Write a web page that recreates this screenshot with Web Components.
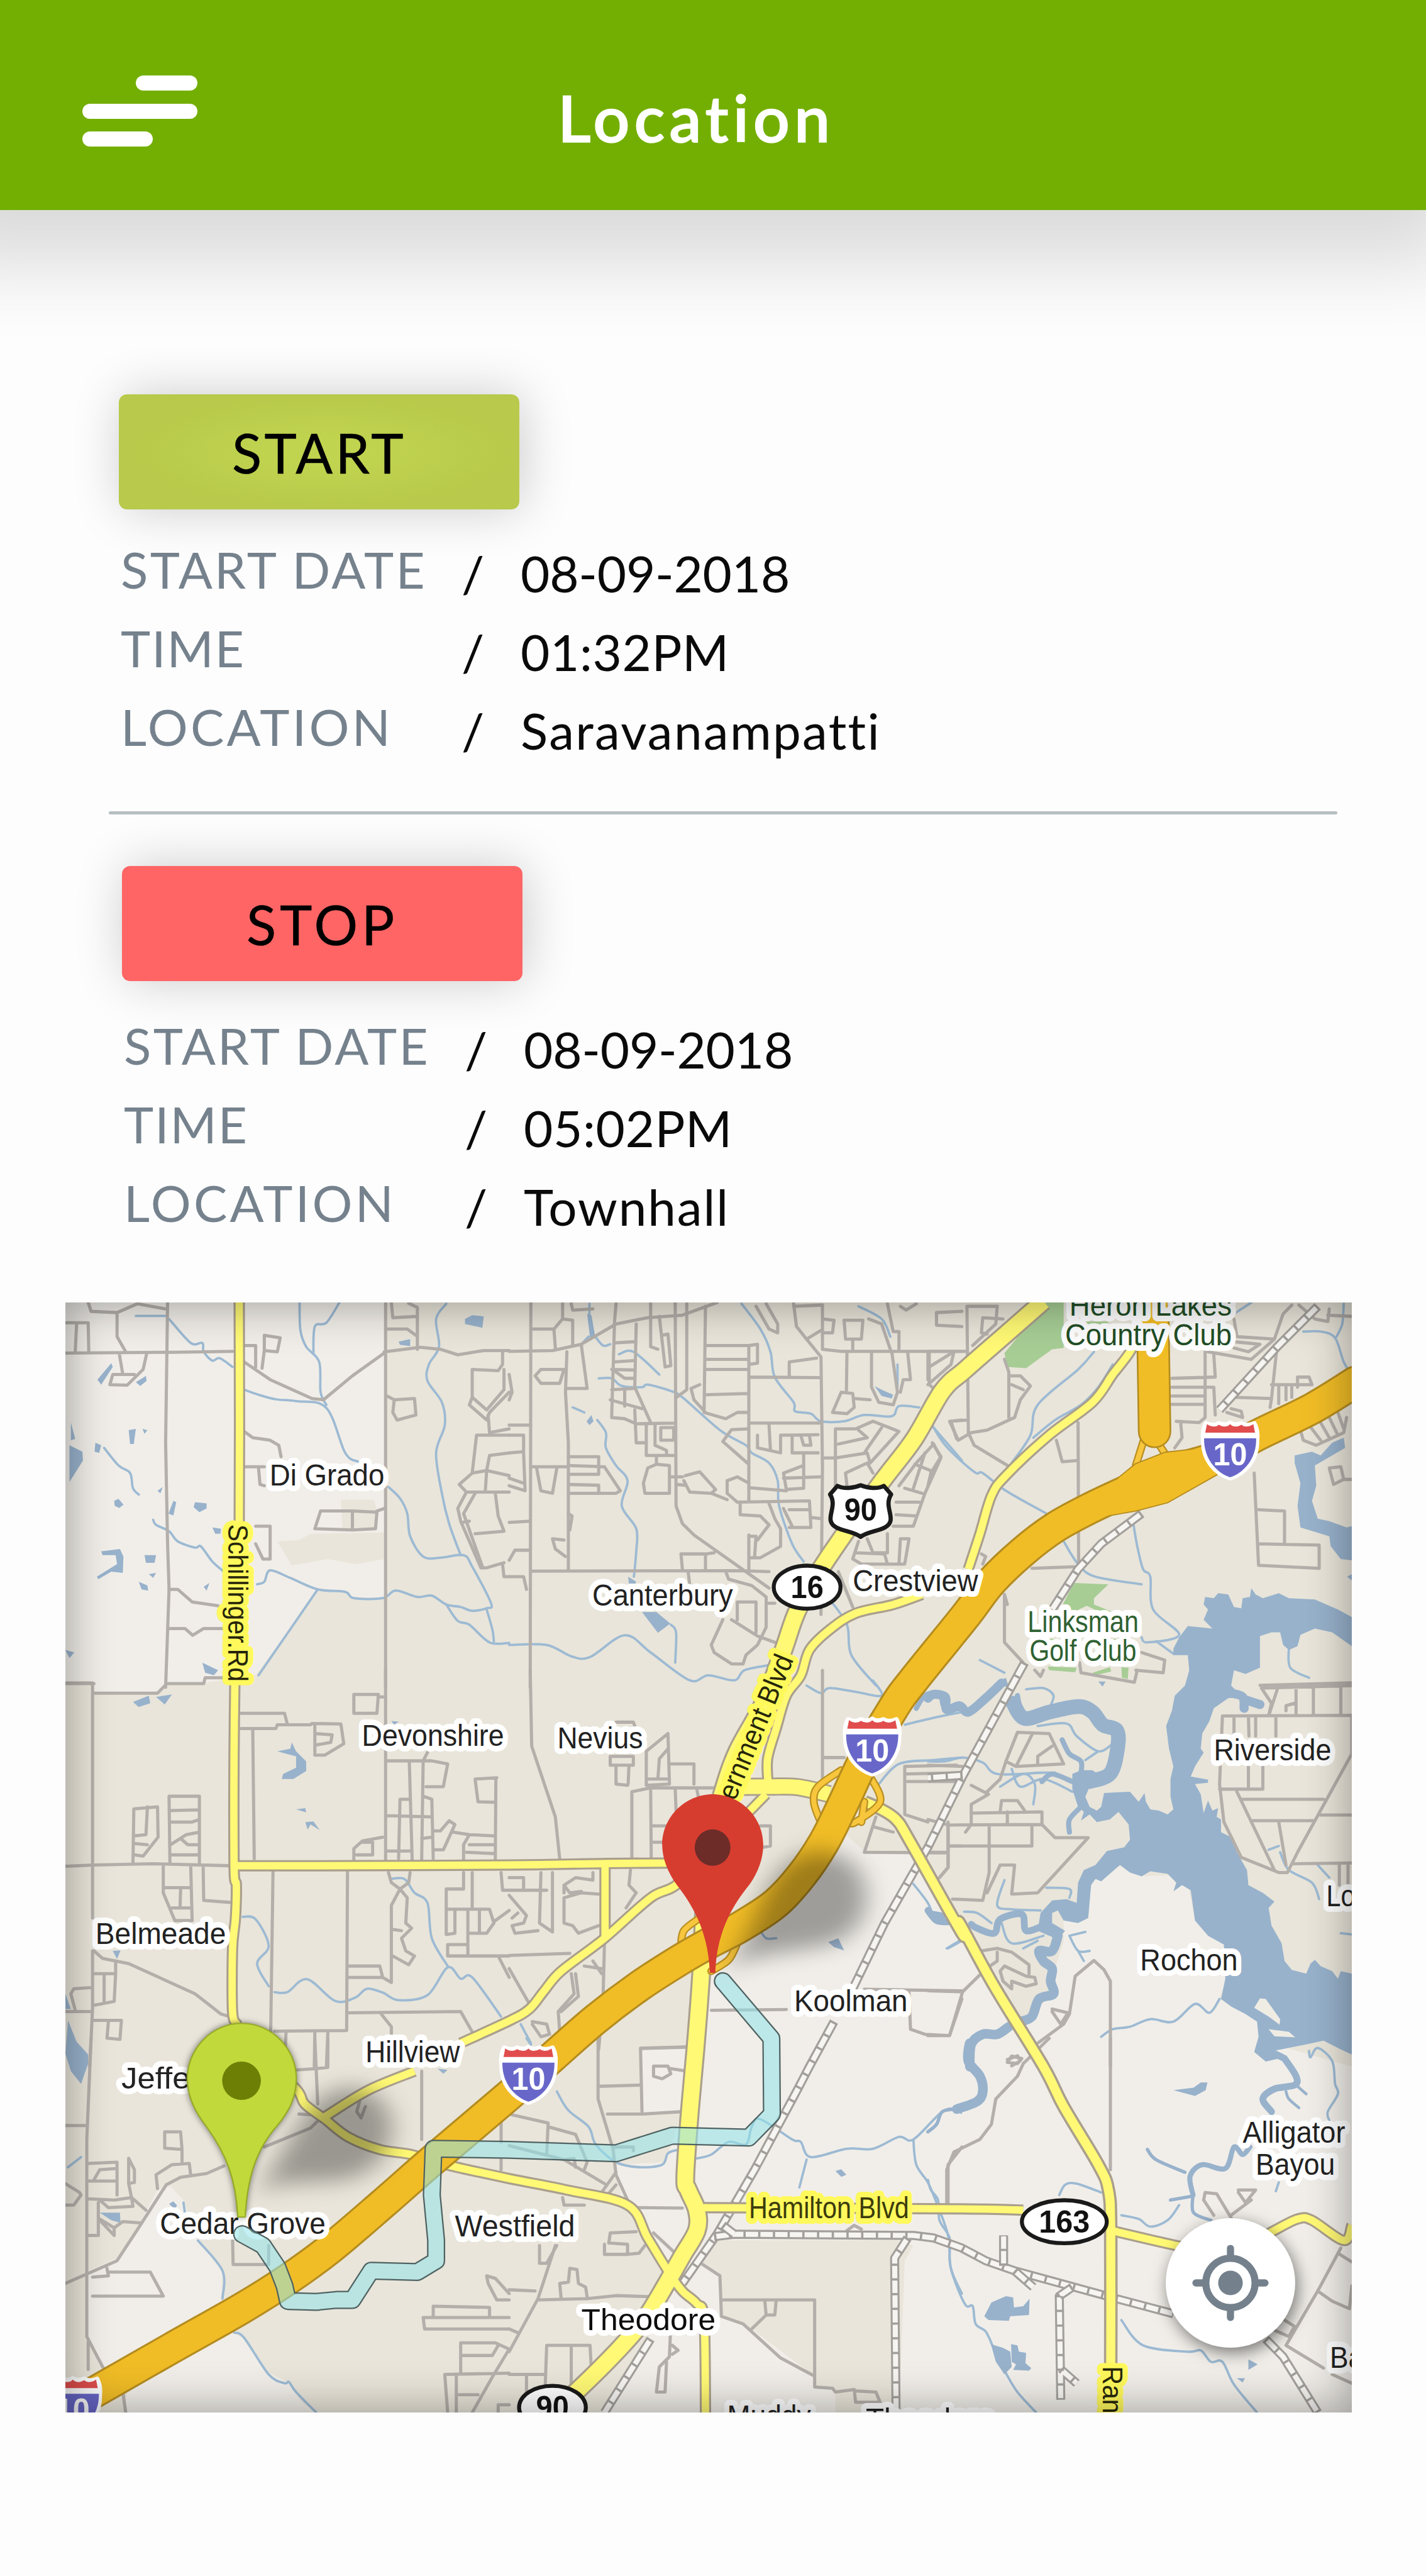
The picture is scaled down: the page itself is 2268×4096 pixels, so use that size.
<!DOCTYPE html>
<html lang="en">
<head>
<meta charset="utf-8">
<title>Location</title>
<style>
  html, body { margin: 0; background: #fdfdfd; }
  body { font-family: Lato, "Open Sans", sans-serif; color: #0a0a0a; width: 2268px; height: 4096px; overflow: hidden; }
</style>
</head>
<body>
<location-screen>
  <app-header slot="header"><tracked-text fit="440">Location</tracked-text></app-header>
  <trip-section>
    <trip-button slot="action" tone="start"><tracked-text fit="277">START</tracked-text></trip-button>
    <trip-row><tracked-text slot="label" fit="487">START DATE</tracked-text><tracked-text fit="428">08-09-2018</tracked-text></trip-row>
    <trip-row><tracked-text slot="label" fit="198">TIME</tracked-text><tracked-text fit="332">01:32PM</tracked-text></trip-row>
    <trip-row><tracked-text slot="label" fit="433">LOCATION</tracked-text><tracked-text fit="573">Saravanampatti</tracked-text></trip-row>
  </trip-section>
  <trip-section class="second">
    <trip-button slot="action" tone="stop"><tracked-text fit="241">STOP</tracked-text></trip-button>
    <trip-row><tracked-text slot="label" fit="487">START DATE</tracked-text><tracked-text fit="428">08-09-2018</tracked-text></trip-row>
    <trip-row><tracked-text slot="label" fit="198">TIME</tracked-text><tracked-text fit="332">05:02PM</tracked-text></trip-row>
    <trip-row><tracked-text slot="label" fit="433">LOCATION</tracked-text><tracked-text fit="327">Townhall</tracked-text></trip-row>
  </trip-section>
  <trip-map slot="map"><locate-button slot="control"></locate-button></trip-map>
</location-screen>

<script>
const define = (name, html, init) => customElements.define(name, class extends HTMLElement {
  connectedCallback() {
    if (this.shadowRoot) return;
    this.attachShadow({ mode: 'open' }).innerHTML = html;
    if (init) init(this, this.shadowRoot);
  }
});

define('location-screen', `
<style>
  :host { display: flex; flex-direction: column; width: 2268px; height: 4096px; background: #fdfdfd; overflow: hidden; }
  main { display: flex; flex-direction: column; padding-top: 293px; }
  ::slotted(trip-section) { margin-left: 189px; }
  ::slotted(trip-section.second) { margin-left: 194px; }
</style>
<slot name="header"></slot><main><slot></slot></main><slot name="map"></slot>`);

define('app-header', `
<style>
  :host { display: grid; grid-template-columns: 1fr auto 1fr; height: 334px; flex: none; background: #73af02; color: #fff;
    box-shadow: -30px 0 120px 84px rgba(0,0,0,.14); position: relative; z-index: 0; }
  menu-icon { margin: 120px 0 0 131px; }
  .title { font-size: 102px; font-weight: 600; line-height: 120px; padding-top: 127px; margin-right: 54px; -webkit-text-stroke: 1.4px #fff; }
</style>
<menu-icon></menu-icon><div class="title"><slot></slot></div>`);

define('menu-icon', `
<style>
  :host { display: flex; flex-direction: column; width: 183px; height: 113px; justify-content: space-between; }
  i { height: 24px; border-radius: 12px; background: #fff; }
  i:nth-of-type(1) { width: 98px; align-self: flex-end; }
  i:nth-of-type(3) { width: 112px; }
</style><i></i><i></i><i></i>`);

define('trip-section', `
<style>
  :host { display: flex; flex-direction: column; align-items: flex-start; }
  .rows { display: flex; flex-direction: column; padding-top: 47px; }
  .rule { width: 1954px; height: 5px; margin: 58px 0 82px -16px; background: #b6bec2; border-radius: 3px; }
  :host(.second) .rule { display: none; }
  :host(.second) .rows { padding-top: 54px; }
</style>
<slot name="action"></slot><div class="rows"><slot></slot></div><div class="rule"></div>`);

define('trip-button', `
<style>
  :host { display: flex; justify-content: center; width: 637px; height: 183px; border-radius: 13px; color: #000;
    font-size: 87px; line-height: 104px; box-shadow: 5px 0 80px rgba(0,0,0,.2); -webkit-text-stroke: .6px #000; }
  :host([tone=start]) { background: radial-gradient(ellipse closest-side at 51% 50%, #c1d44f 20%, #b8c94b); }
  :host([tone=stop]) { background: #ff6565; }
  div { padding-top: 41px; }
</style><div><slot></slot></div>`);

define('trip-row', `
<style>
  :host { display: grid; grid-template-columns: 545px 94px auto; height: 125px; font-size: 80px; line-height: 96px; align-items: start; }
  .label { color: #75828d; padding-left: 3px; }
  .sep, .value { padding-top: 6px; }
</style>
<div class="label"><slot name="label"></slot></div><div class="sep">/</div><div class="value"><slot></slot></div>`);

define('locate-button', `
<style>
  :host { display: block; width: 206px; height: 206px; border-radius: 50%; background: #fff; box-shadow: 4px 8px 26px rgba(0,0,0,.5); }
  svg { display: block; width: 100%; height: 100%; }
</style>
<svg viewBox="-114.4 -114.4 228.8 228.8" fill="none" stroke="#74818d" stroke-width="12.6" stroke-linecap="round">
  <circle r="43.5"/><circle r="21.7" fill="#74818d" stroke="none"/>
  <path d="M0-61V-48M0 48V61M-61 0H-48M48 0H61"/>
</svg>`);

/* ---------- map data: each survey sheet has its own origin and local grid ---------- */
const SHEETS = { a:[100,2280], b:[900,2280], c:[1640,2280], d:[100,2950], e:[900,2950], f:[1640,2950], g:[100,3600], h:[900,3600], i:[1640,3600] };
const KX = 800 / 1568, KY = 700 / 1568;
const at = (s, x, y) => [SHEETS[s][0] + x * KX, SHEETS[s][1] + y * KY];
function trace(str, smooth) {
  let sheet = 'a', runs = [[]];
  for (const t of str.trim().split(/\s+/)) {
    if (SHEETS[t]) sheet = t;
    else if (t === '|') runs.push([]);
    else { const [x, y] = t.split(',').map(Number); runs[runs.length - 1].push(at(sheet, x, y)); }
  }
  const f = n => n.toFixed(1);
  return runs.filter(r => r.length).map(p => {
    let d = `M${f(p[0][0])} ${f(p[0][1])}`;
    for (let k = 1; k < p.length; k++) {
      if (!smooth) { d += `L${f(p[k][0])} ${f(p[k][1])}`; continue; }
      const p0 = p[k - 2] || p[k - 1], p1 = p[k - 1], p2 = p[k], p3 = p[k + 1] || p2;
      d += `C${f(p1[0] + (p2[0]-p0[0])/6)} ${f(p1[1] + (p2[1]-p0[1])/6)} ${f(p2[0] - (p3[0]-p1[0])/6)} ${f(p2[1] - (p3[1]-p1[1])/6)} ${f(p2[0])} ${f(p2[1])}`;
    }
    return d;
  }).join('');
}

const LIGHT = [
  'a 31,45 1138,45 1138,955 880,960 840,985 765,990 815,1085 940,1060 1035,1080 1138,1060 1138,1215 1030,1215 1000,1190 905,1185 690,1520 d 620,30 510,50 380,55 350,90 130,90 125,50 31,50',
  'g 395,585 440,640 490,795 575,925 570,1035 615,1165 650,1190 730,1320 800,1360 850,1440 900,1481 235,1481 245,1400 160,1300 110,1190 110,920 210,870 290,730 350,600',
  'e 1165,650 1235,720 1400,720 1568,1060 f 190,1110 320,1370 350,1360 430,1290 440,1180 470,1070 470,990 555,980 565,840 660,770 740,815 850,810 905,870 925,990 1030,1080 1040,1200 1010,1300 1140,1380 1200,1480 1468,1568 i 1468,1481 h 1350,1481 1370,880 1400,820 1340,800 700,800 670,890 730,940 740,1100 840,1150 1050,1330 1060,1380 1130,1390 1130,1481 350,1481 480,1190 570,1000 550,920 430,650 390,640 370,500 540,490 600,290 460,295 450,40 e 620,1490 650,1190 700,1190 780,1100 900,1010 1060,850'
];
const SHADE = ['a 985,825 1100,825 1110,870 1110,940 990,940'];
const PARK = ['c 410,45 470,45 470,225 430,230 340,305 275,300 265,245', 'c 505,1155 625,1160 575,1215 575,1240 640,1270 600,1272 550,1245 500,1272 465,1245', 'c 415,1485 515,1490 510,1508 420,1500', 'c 570,1510 630,1488 635,1505 580,1520', 'c 670,1488 695,1490 692,1535 672,1530', 'c 540,120 625,120 620,138 540,135','c 415,1375 460,1378 440,1390','c 630,1375 665,1378 650,1395'];
const WATER = [
  'c 960,1210 990,1215 1005,1195 1040,1200 1060,1250 1085,1255 1090,1215 1115,1210 1120,1175 1135,1200 1160,1215 1215,1195 1250,1215 1340,1220 1420,1260 1468,1290 1468,1405 1400,1350 1340,1335 1290,1360 1280,1405 1250,1420 1230,1400 1220,1350 1190,1350 1150,1365 1150,1490 1100,1515 1060,1500 f 1050,60 1090,105 1040,110 990,150 975,200 950,250 945,310 955,325 925,380 910,420 970,432 970,445 925,450 945,490 955,565 970,515 985,555 1005,545 1000,580 1015,590 1015,640 1050,660 1070,720 1105,790 1110,850 1160,880 1200,915 1180,940 1190,1010 1225,1080 1235,1150 1260,1185 1310,1200 1325,1160 1340,1145 1360,1170 1400,1190 1420,1220 1430,1190 1468,1200 1468,1520 1430,1500 1370,1465 1310,1480 1200,1505 1240,1530 1170,1548 1130,1510 1145,1450 1140,1390 1100,1360 1050,1330 1015,1300 1030,1220 1025,1085 970,1050 925,990 910,870 880,850 850,875 860,840 830,805 770,795 740,815 700,800 665,770 600,835 580,825 565,850 555,980 520,1000 470,990 450,950 430,960 430,1000 475,1030 450,1065 380,1030 390,960 430,910 480,905 515,920 520,840 540,790 580,770 620,715 680,700 700,670 695,610 660,560 630,590 585,600 560,570 530,595 540,560 520,540 500,470 500,410 530,395 570,395 600,420 610,440 560,460 545,500 560,540 585,555 600,540 610,485 700,480 730,520 750,485 755,520 770,550 800,555 830,570 850,550 840,500 840,430 850,380 835,310 825,220 845,160 855,100 890,60 905,0 c 900,1440 850,1440 850,1415 870,1370 900,1325 985,1335 955,1300 970,1260 955,1240',
  'c 1270,650 1330,635 1360,650 1400,600 1440,580 1445,620 1400,650 1340,690 1345,770 1330,830 1350,900 1390,910 1450,935 1468,930 1468,1065 1430,1060 1395,1010 1390,970 1290,935 1280,850 1290,760 1270,680',
  'd 40,1385 70,1470 110,1520 110,1568 g 110,100 85,180 50,130 31,60',
  'd 31,1280 50,1340 31,1340',
  'a 50,520 65,585 50,590 | 45,610 90,635 92,670 45,755 | 190,285 195,300 155,370 142,350 | 310,335 312,355 290,375 275,360 | 250,550 275,545 268,605 255,605 | 298,545 315,550 305,565 | 135,600 155,610 148,640 132,635 | 480,835 520,840 520,860 495,875 475,855 | 405,830 415,835 405,888 388,880 | 155,1030 220,1020 232,1050 230,1115 190,1110 145,1140 140,1130 210,1080 205,1045 160,1045 | 305,1045 345,1045 340,1075 310,1075 | 320,1120 345,1115 335,1135 | 285,1150 315,1165 318,1185 295,1180 | 510,1170 530,1155 520,1185 | 540,935 570,940 568,960 550,960 | 350,790 368,775 360,800 | 200,830 215,822 232,845 218,858 202,850 | 505,1470 560,1500 545,1520 515,1510 | 1415,110 1440,95 1480,100 1475,145 1415,130 | 1185,200 1225,190 1225,218 1190,212 | 31,1420 62,1430 45,1452',
  'd 265,125 320,100 325,130 285,145 | 345,105 400,95 375,135 | 765,320 810,310 815,285 830,320 865,360 865,398 820,430 780,430 785,410 830,385 830,340 | 830,550 862,545 865,562 | 862,600 890,598 912,632 880,610 870,630 | 195,1110 222,1108 210,1142 | 1160,200 1185,203 1170,215',
  'b 270,90 285,95 298,180 280,185 | 268,515 285,490 292,515 278,530 | 412,1130 440,1150 435,1162 415,1160 | 460,1270 510,1270 558,1315 515,1352 | 1265,375 1290,390 1330,410 1325,425 1290,415',
  'e 1105,1075 1140,1060 1160,1108 1125,1095 | 1460,950 1510,960 1510,1005 1480,995',
  'c 230,1555 270,1530 280,1568 | 590,1545 615,1545 605,1565 | 1452,1130 1468,1120 1468,1145',
  'g 150,690 220,690 222,730 190,720 | 390,655 405,645 418,662 408,675 | 1320,120 1355,125 1340,140',
  'h 1130,525 1150,518 1168,540 1150,548 | 1535,270 1568,260 1568,300 1545,290',
  'i 850,205 920,195 945,175 968,175 962,205 925,228 | 195,1100 220,1045 270,1020 295,1025 298,1065 330,1060 352,1030 350,1095 285,1100 280,1118 210,1115 | 218,1210 260,1225 285,1240 290,1300 265,1330 235,1280 | 288,1210 310,1215 315,1240 340,1245 338,1285 358,1305 350,1315 295,1312 305,1290 290,1280 | 1110,1270 1142,1290 1110,1312 | 1070,1345 1098,1345 1090,1362'
];
const ISLAND = ['f 1150,1298 1170,1300 1220,1380 1218,1402 1180,1370 1130,1335', 'f 1180,1420 1250,1430 1272,1452 1200,1448'];
const RIVERS = [
  [16, 'f 255,50 200,110 140,165 110,140 65,155 60,105 20,95 0,110 | 1050,90 1090,105 1095,150 | 1095,115 1150,135'],
  [26, 'f 295,130 335,190 420,165 520,143 570,165 605,215 655,240 655,320 630,410 560,440'],
  [9, 'e 1410,150 1440,100 1490,90 1510,150 1568,150'],
  [9, 'f 465,275 490,330 530,360 530,410 | 500,440 430,410 395,440 | 530,540 490,590 490,640 | 310,100 320,160'],
  [12, 'f 400,1010 340,1030 325,965 250,985 230,1040 170,1020 150,1005 | 70,995 30,990 0,950'],
  [17, 'f 450,1050 430,1110 385,1110 400,1150 430,1180 425,1230 435,1280 385,1300 360,1370 320,1390 | 280,1410 240,1440 190,1440 150,1480 145,1568 i 145,20 140,90 180,150 190,210 170,250 100,280'],
  [12, 'i 1235,80 1275,150 1270,185 1200,200 1160,240 1190,290 | 1200,60 1235,80'],
  [5, 'i 1240,210 1250,240 1285,275 | 1280,190 1310,220'],
  [9, 'i 1115,430 1090,460 1060,430 1030,515 950,500 908,545 918,620'],
  [6, 'i 918,620 920,690 980,720 | 840,640 915,625 | 100,280 50,290 30,340 0,370 | 760,440 790,480 890,530']
];
const CREEKS = [
  'a 275,98 378,98 | 390,110 465,205 505,205 510,240 540,275 565,265 610,300 | 650,390 700,410 760,428 830,435 935,462 1000,640 1045,675 | 842,45 845,155 865,220 910,280 915,400 935,450 | 980,45 935,125 895,140 890,250',
  'a 165,620 215,690 255,720 265,780 285,805 | 335,905 345,925 390,950 420,990 480,1015 500,1010 540,1070 580,1110 | 695,1160 720,1150 740,1105 810,1135 905,1180 1000,1190 1030,1215 1130,1215 1175,1185 1250,1210 1300,1205 1350,1240 1400,1250 1440,1265 1490,1255 1505,1235 1440,1090 1410,1045 1330,1055 1270,1050 1225,970 1215,880 1190,820 1150,775 | 905,1180 700,1520',
  'a 1350,1240 1390,1305 1430,1320 1500,1390 1568,1392 | 1490,1260 1510,1340 1515,1385 | 1350,50 1315,110 1325,220 1290,290 1285,355 1335,440 1345,530 1315,640 1335,800 1360,920 1400,1045',
  'b 275,180 250,210 | 278,50 278,95 | 295,175 325,215 350,210 | 380,250 430,240 520,330 | 310,345 355,345 390,375 460,380 480,370 560,395 600,420 730,550 820,610 840,640 900,680 930,750 935,850 980,1000 1020,1070 | 220,460 260,480 | 305,510 335,560 335,620 370,690 410,750 390,850 440,940 440,1030 432,1130 | 805,50 870,150 905,240 920,340 985,440 990,475 1045,485 1080,515 1160,515 1230,490 1325,495 1350,455 1420,460 | 1470,540 1568,670',
  'b 1210,60 1290,110 1320,180 | 1345,290 1345,380 | 0,1400 130,1400 215,1445 280,1448 400,1362 490,1430 625,1540 690,1520 780,1540 815,1500 900,1480 | 560,1320 578,1350 575,1470 | 1110,1220 1170,1320 1185,1440 1270,1560',
  'c 0,500 60,610 160,715 190,720 270,790 410,880 | 575,240 520,310 380,450 355,570 290,680 | 640,290 590,380 530,450 440,510 365,580 | 470,990 520,1080 580,1130 740,1160 | 710,910 725,1010 745,1100 770,1130 780,1260 870,1360 760,1390 740,1370 | 790,1385 850,1435 | 180,1460 265,1510',
  'c 1060,90 1120,45 | 1300,160 1360,160 1410,185 1440,280 1468,330 | 1440,50 1435,130 1415,180 | 1250,1410 1255,1490 1320,1530',
  'd 645,975 690,985 735,1090 695,1160 735,1250 | 755,1273 800,1273 868,1222 965,1308 1035,1295 1075,1260 1130,1275 1185,1305 1285,1285 1355,1175 1400,1220 1440,1215 1540,1370 | 1160,825 1205,825 1240,880 1285,920 1300,1060 1355,1170',
  'e 1030,60 1080,90 1110,70 1200,85 1290,100 1260,40 | 1370,215 1480,185 1568,165 | 1280,450 1350,370 1470,355 1568,345 | 870,1030 890,1060 925,1060 | 1400,845 1450,920 1470,980 | 1520,1100 1560,1075 | 40,1400 75,1475',
  'f 340,75 400,70 435,100 420,150 | 380,220 480,210 515,260 590,320 640,290 | 545,355 590,320 | 0,360 60,360 120,345 190,365 240,410 390,405 440,405 | 250,460 330,410 370,450 365,530 | 290,390 320,460 400,430 500,480 | 265,830 240,930 290,945 390,950 | 410,860 490,865 490,900 | 125,955 170,960 220,1000 | 255,1000 290,1080 400,1050 | 65,1100 110,1070 | 490,1050 545,1035 | 490,1050 520,1110 560,1110 | 520,1110 540,1150 | 330,1100 380,1070',
  'f 1220,720 1250,790 1330,840 1355,905 | 1350,770 1390,820 | 1180,710 1215,695 | 600,1450 640,1420 700,1410 770,1380 850,1390 925,1320 975,1355 1010,1300 | 1430,1040 1468,1045',
  'g 440,650 445,690 | 490,800 575,920 575,1030 | 615,1165 650,1185 735,1330 790,1365 805,1360 830,1400 900,1481 | 40,510 85,470',
  'h 165,210 205,285 275,350 300,420 370,490 450,510 530,500 550,455 590,440 | 650,475 700,460 760,410 820,420 840,350 870,320 980,400 1010,410 1045,470 1170,437 1260,437 1350,390 1400,400 1500,290 1550,280 | 1030,480 1005,590 | 1400,400 1410,500 1450,570 1480,650 1520,780 1530,910 1568,1010 | 60,0 75,25',
  'i 0,560 10,600 35,640 40,720 75,790 75,880 90,950 130,1055 155,1060 165,1130 200,1160 225,1220 | 270,1325 310,1400 375,1481 | 455,620 475,580 515,575 600,610 | 670,700 730,715 770,745 830,720 870,660 | 670,1115 745,1215 900,1240 945,1235 980,1280 1020,1280 1060,1370 1140,1481 | 1320,50 1325,75 1350,38 1400,90 1410,180 1420,220 1385,290 1390,325 | 1215,570 1205,605'
];
const MINOR = [
  'a 110,45 120,80 210,85 210,180 240,240 | 210,85 280,50 385,72 | 385,45 378,600 385,1000 390,1180 378,1568 | 31,125 110,125 112,240 | 70,125 65,240 | 31,245 400,242 610,238 | 218,250 230,330 | 312,250 300,310 245,372 185,370 195,330 270,330',
  'a 655,215 690,215 690,300 | 720,175 775,185 765,240 720,235 720,175 | 720,235 712,305 | 650,280 740,350 885,425 925,430 1025,335 1135,245 | 650,555 680,580 740,590 770,610 778,655 | 655,695 720,695 | 700,700 705,765 720,770 | 1140,45 1140,1568 | 690,930 740,930 740,1060 715,1060 690,1000 | 915,870 895,940 1025,945 1025,870 915,870 | 1025,870 1110,875 1105,940 1025,945 | 1110,870 1135,860',
  'a 390,1180 420,1180 470,1230 560,1245 | 390,1335 445,1335 472,1362 510,1335 575,1335 | 380,1553 510,1553 515,1530 575,1530 | 31,1553 130,1553',
  'a 1160,45 1165,105 1250,100 1250,65 1220,48 | 1140,150 1215,150 1245,175 | 1250,100 1250,230 | 1135,240 1260,222 1330,230 1390,252 1480,235 1568,235 | 1170,430 1240,425 1245,490 1180,510 1165,480 1170,430 1145,415 | 1545,235 1545,290 1530,315 1440,310 1440,420 1490,470 1550,390 1550,310 | 1440,420 1430,450 1490,510 1500,480 1568,400 | 1495,490 1500,560 1568,545',
  'a 1568,570 1455,570 1440,720 1395,765 1420,795 1568,795 | 1440,720 1490,710 1485,795 | 1490,710 1500,650 1568,640 | 1490,710 1568,730 | 1420,795 1390,860 1400,910 1470,1095 1490,1095 1550,1075 | 1450,800 1410,880 1475,1090 | 1520,800 1530,890 1550,950 1450,960 | 1405,915 1430,910 | 1545,1080 1550,1130 1568,1130',
  'b 75,45 73,1568 | 0,238 150,235 250,210 370,130 480,105 600,95 720,45 | 75,150 155,150 160,225 | 155,150 185,110 220,115 220,215 | 185,50 185,110 | 215,50 220,75 290,70 | 200,240 195,400 205,600 205,1100 | 250,215 270,385 200,385 | 110,310 190,310 175,365 110,365 90,335 110,310 | 0,330 10,400 0,430 | 0,530 75,530 | 0,570 50,570 50,635 0,640 | 50,640 55,790 0,770 | 0,740 50,760 | 75,695 205,695 | 95,700 110,790 150,800 165,700',
  'b 205,655 310,655 310,725 205,725 | 205,690 330,695 385,790 370,800 205,800 | 205,765 310,768 310,800 | 0,915 73,910 | 205,880 218,890 210,945 | 190,985 150,980 160,1020 195,1050 | 73,1025 20,1025 0,1065 | 0,1130 50,1130 60,1180 | 75,1108 800,1106 900,1110',
  'b 370,50 365,120 355,500 | 440,130 435,380 490,520 | 490,50 490,220 515,230 | 520,100 540,300 560,295 550,170 530,175 | 575,45 578,850 600,920 640,965 900,1175 | 615,50 615,390 580,420 | 365,205 435,200 | 365,280 430,275 | 355,310 430,312 | 370,320 400,345 430,345 | 355,390 430,385 | 400,390 400,455 | 350,430 460,465 | 355,500 400,505 440,525 575,522 | 435,470 440,600 470,600 | 475,525 475,650 570,650 | 505,530 505,610 545,630 545,645 | 525,540 570,540 570,590 525,590 525,540 | 510,650 510,685 555,690 555,800 470,800 465,760 480,700 510,685 | 555,735 600,735',
  'b 680,60 675,480 750,505 790,480 830,480 | 680,215 830,215 | 680,270 830,270 | 680,310 830,310 | 680,410 830,405 | 830,215 830,830 | 830,215 860,210 860,285 830,290 | 660,370 630,385 640,430 680,480 | 830,340 1080,342 | 830,522 1080,522 | 970,340 970,280 1065,265 | 855,60 900,150 930,165 930,130 890,50 | 985,50 995,140 1030,190 1080,260 1085,700 1080,1280 | 1030,190 1080,155 | 1085,60 1085,230 1150,238 1568,238 | 985,60 1085,55 | 1085,110 1125,115 1120,165 1085,165 | 1160,115 1225,115 1220,190 1165,190 1160,115 | 1190,195 1190,235',
  'b 830,545 770,548 740,595 825,680 | 860,570 860,620 940,640 940,570 1070,568 | 900,530 905,630 | 980,570 980,640 1020,640 1070,640 | 1010,570 1020,610 1045,610 1040,570 | 1020,640 1020,780 960,785 950,720 1020,690 | 950,740 1080,735 | 610,730 660,715 715,785 700,800 625,795 605,750 | 580,765 610,768 | 700,800 755,825 | 755,750 790,735 830,760 | 755,750 755,800 790,835 1040,830 1045,935 970,935 | 800,840 800,885 870,890 900,925 860,985 | 900,840 920,900 940,940 940,1010 870,1055 830,1055 | 835,970 855,970 850,1050 | 830,965 830,1110 | 950,860 980,930 | 970,865 1040,865 | 830,778 960,790 | 1045,895 1080,900',
  'b 595,1040 600,1100 | 595,1040 680,1040 680,1105 | 680,1040 710,1035 | 620,1110 625,1160 | 750,1110 760,1140 840,1165 890,1210 890,1330 860,1400 820,1440 810,1475 770,1475 710,1430 700,1400 740,1300 | 790,1230 855,1230 855,1350 | 770,1300 860,1365 920,1390 | 890,1235 920,1235 | 790,1230 790,1300',
  'b 1150,400 1190,405 1195,460 1170,485 1120,480 1150,400 | 1195,425 1250,430 | 1170,240 1168,400 | 1255,240 1255,380 1280,440 1330,450 1345,400 1325,240 | 1380,240 1390,350 1365,350 1355,400 | 1455,240 1455,300 1540,240 | 1455,300 1455,370 1475,390 | 1245,110 1290,130 1320,230 | 1310,50 1330,160 1350,160 1350,230 | 1480,85 1568,80 | 1480,85 1480,135 1568,140 | 1355,60 1375,75 1410,50 | 1530,515 1568,510 | 1530,515 1550,585',
  'b 1130,545 1200,545 1260,515 1350,555 1250,680 1240,640 1130,660 | 1130,545 1130,770 | 1210,550 1240,580 1140,605 | 1290,540 1230,640 | 1085,660 1130,660 | 1165,720 1240,680 1260,720 | 1165,720 1170,770 | 1470,605 1495,660 1440,800 1400,930 1330,930 | 1470,605 1410,680 1350,770 | 1340,835 1420,835 | 1340,885 1410,890 | 1405,685 1460,710 | 1370,780 1430,800 | 1440,640 1400,780 | 1210,990 1190,1060 1220,1080 1370,1080 1385,980 1355,980 1350,1080 | 1240,980 1260,1035 1310,1035 1310,960 | 1200,1035 1300,1040 1310,1080 | 1140,1110 1190,1250',
  'c 135,60 140,560 160,610 290,700 | 140,60 240,60 235,130 155,215 | 190,105 260,110 | 190,105 185,165 205,170 | 0,238 135,238 | 265,270 280,320 280,500 | 280,335 320,335 355,375 320,430 300,500 205,550 150,560 105,590 75,515 135,510 | 290,370 330,390 | 520,520 522,1090 360,1097 | 445,590 465,675 520,670 | 0,240 0,350 | 90,240 80,290 0,370 | 15,600 45,655 10,720 0,770 | 185,1040 200,1050 190,1080',
  'c 960,240 960,500 940,520 860,515 | 990,250 995,340 845,345 | 845,380 990,380 995,490 | 845,415 955,415 | 845,448 955,448 | 875,515 880,580 855,620 | 1060,110 1070,180 1200,190 1230,90 1260,55 | 970,240 1120,270 1200,190 | 1060,200 1150,210 1110,240 1060,225 | 1060,420 1190,425 1210,210 | 1190,425 1185,460 | 1190,370 1330,370 1320,340 1280,340 1280,380 | 1215,370 1215,445 | 1240,370 1240,430 | 1260,370 1260,420 | 1285,55 1340,110 1385,120 1390,70 | 1385,95 1468,100 | 1290,550 1300,590 1345,610 1440,560 1450,500 | 1320,530 1360,590 | 1360,520 1390,580 | 1390,500 1420,570 | 1420,480 1440,545 | 1035,480 1090,500 1085,475 1050,465',
  'c 1130,720 1145,1085 1355,1097 1355,1005 1145,1000 | 1145,865 1235,870 1235,1000 | 1390,700 1430,695 1440,745 1405,765 1390,700 | 1440,745 1468,745 | 265,1200 265,1390 330,1470 | 265,1200 275,1240 | 740,1430 820,1460 815,1510 720,1500 | 525,1470 530,1510 715,1548 725,1500 | 370,1500 390,1525 400,1500 | 1150,1560 1468,1550',
  'd 31,50 125,50 125,980 | 130,90 350,90 380,55 | 31,775 130,770 330,765 600,773 | 265,765 268,548 350,540 352,660 300,735 268,730 | 315,540 310,650 268,655 | 268,685 315,690 | 393,760 390,498 495,498 495,765 | 390,555 495,552 | 392,600 470,600 495,590 | 395,690 450,650 495,640 | 430,665 455,690 495,690 | 395,730 495,730 | 370,770 370,880 410,990 470,990 465,770 | 370,860 465,860 | 430,865 428,940 | 400,940 465,940 | 508,770 510,910 600,918',
  'd 640,170 790,170 800,215 | 640,230 760,230 765,215 880,215 885,210 985,212 995,290 930,335 895,335 895,215 | 895,250 955,255 950,285 900,295 | 680,235 685,745 | 1030,95 1115,95 1110,170 1030,170 1030,95 | 1115,105 1140,105 | 1140,0 1140,750 | 750,795 742,1430 | 1008,795 1005,1425 755,1428 | 1030,750 1030,705 1060,675 1130,660 | 1060,680 1095,680 1095,730 1040,730 | 1145,358 1300,358 1355,370 1340,460 1280,460 | 1222,360 1232,750 | 1270,360 1265,750 | 1285,325 1270,358 | 1190,510 1225,510 | 1190,510 1185,745 | 1145,575 1300,580 | 1145,715 1230,715 | 1275,500 1300,510 1305,745 | 1265,665 1300,660',
  'd 1305,635 1330,635 1360,595 1380,610 1340,710 1310,710 | 1375,640 1430,650 1410,690 1410,750 | 1430,650 1520,655 | 1430,690 1520,690 | 1420,720 1520,725 | 1525,425 1450,430 1460,520 1520,522 | 1522,430 1520,745 | 1150,800 1160,840 1190,865 1220,840 1225,800 | 1190,865 1160,930 1160,1235 1130,1215 | 1190,865 1215,900 1210,1000 1230,1020 1195,1060 1210,1110 1240,1130 1220,1165 1165,1130 | 1165,1025 1195,1030 | 1010,1170 1120,1170 1130,1215 1010,1215 | 1010,1355 1400,1350 1440,1430 | 1125,1360 1160,1410 1160,1440 | 1410,800 1410,865 1350,865 1350,1045 1380,1040 1380,945 | 1440,945 1440,800 | 1350,945 1500,945 1515,1000 1490,1040 1425,1040 | 1425,945 1425,1130 | 1465,945 1465,1040 | 1355,1085 1420,1085 | 1355,1085 1355,1130 1568,1130 | 1520,990 1568,950 | 1530,1130 1568,1215 | 1540,800 1545,870 1568,870',
  'd 130,1110 160,1140 250,1160 480,1280 570,1360 600,1370 | 125,1110 125,1340 115,1568 | 130,1200 205,1200 200,1310 130,1325 | 165,1200 165,1310 | 205,1150 205,1200 | 125,1255 60,1260 50,1280 65,1345 | 31,1350 125,1350 | 130,1385 225,1385 220,1460 175,1455 180,1390 | 795,1435 790,1568 | 895,1435 893,1568 | 940,1435 935,1568',
  'e 73,0 78,300 160,580 175,745 | 350,340 430,340 430,375 350,375 350,340 | 370,375 370,450 410,455 | 415,375 412,450 | 370,205 430,205 435,220 | 475,320 550,250 555,450 475,455 475,320 | 550,310 520,350 515,430 | 475,430 555,430 | 555,370 640,370 640,450 | 425,480 490,465 720,465 | 425,480 425,740 | 490,465 492,740 | 575,470 580,610 | 650,470 655,500 | 495,615 560,615 | 495,680 540,680 | 870,615 905,615 905,695 880,700 | 1085,0 1085,430 | 1085,345 1160,345 | 1370,380 1550,375 | 1370,380 1370,570 1450,600 | 1370,410 1560,405 1550,440 1380,440 | 1270,580 1230,720 1510,722 | 1265,620 1330,640 | 1520,600 1520,780 1490,820 | 1525,695 1568,695',
  'e 0,870 130,870 | 0,820 50,820 50,870 | 110,800 105,1000 150,1035 150,800 | 0,890 60,970 50,1000 10,1010 20,1040 100,1030 | 30,960 10,980 | 190,880 190,850 230,820 290,830 290,800 | 190,850 210,880 250,875 | 190,900 250,880 310,885 | 190,900 190,1000 220,1010 240,1040 310,1010 | 420,790 415,850 440,880 405,940 | 0,1128 210,1120 | 330,1080 325,1300 310,1500 | 215,1200 225,1280 170,1350 175,1430 | 230,1200 240,1290 180,1350 | 260,1170 320,1180 | 290,1150 320,1200 | 0,1180 75,1330 | 80,1390 130,1400 140,1440 110,1450 80,1400 | 700,1345 960,1342 | 1230,1262 1568,1268 | 1385,1275 1390,1420 1440,1440 1525,1445 1568,1300 | 610,1490 455,1495',
  'f 310,245 420,250 470,370 305,380 270,360 310,245 | 360,255 305,380 | 430,300 380,340 380,370 | 270,360 250,430 205,480 | 150,455 210,490 150,530 150,610 130,640 | 150,565 395,560 395,610 70,612 | 250,560 255,515 310,515 335,555 | 275,560 275,610 | 395,610 440,662 555,662 380,880 290,885 300,770 250,770 205,880 | 70,612 70,780 40,820 | 75,695 360,695 360,612 | 212,615 212,800 190,910 85,905 | 0,375 120,380 | 0,590 70,612 | 0,720 70,720',
  'f 1155,70 1468,60 | 1155,70 1190,130 1180,180 | 1210,75 1180,180 | 1020,180 1468,178 | 1020,180 1010,450 1025,600 1085,740 1215,800 1245,800 1280,720 1468,330 | 1060,180 1060,260 | 1110,180 1112,260 | 1135,180 1135,260 | 1205,180 1205,260 | 1335,70 1335,178 | 1275,70 1275,178 | 1430,60 1430,178 | 1468,180 1468,330 | 1010,470 1160,470 1160,380 | 1110,380 1110,470 | 1070,480 1200,790 | 1085,510 1370,510 | 1125,595 1335,595 | 1215,600 1240,770 | 1360,572 1468,572 | 1265,765 1468,762 | 1425,770 1425,850 | 1455,770 1455,850 | 1240,160 1240,140 1270,130',
  'f 0,1268 120,1272 180,1205 | 120,1272 75,1445 0,1445 | 185,1110 240,1100 290,1115 350,1165 350,1200 | 240,1115 240,1150 215,1170 | 265,1170 340,1210 370,1215 375,1240 340,1250 290,1230 290,1260 260,1230 250,1190 265,1170 | 380,1475 470,1400 490,1360 510,1210 575,1148 610,1185 632,1230 632,1568 | 430,1340 485,1355 460,1400 430,1350 | 275,1540 310,1525 320,1545 290,1565',
  'g 31,345 100,345 | 120,0 105,400 105,1180 160,1300 230,1400 240,1481 | 110,1200 110,1310 | 375,370 430,370 435,440 375,435 375,370 | 435,440 435,490 | 110,495 210,490 210,620 | 130,560 150,520 210,515 | 110,565 210,565 | 250,475 270,520 270,570 250,575 250,475 | 250,575 260,630 200,640 110,635 | 150,640 180,670 265,665 260,630 310,680 | 145,650 145,780 110,780 | 150,720 200,780 200,750 150,715 | 200,750 230,725 290,730 | 350,595 345,540 400,500 460,495 465,540 | 31,575 80,610 85,620 60,660 31,660 | 31,970 210,880 290,740 380,580 430,550 520,535 580,505 | 720,430 880,355 920,310 | 125,945 180,940 175,910 | 180,925 325,925 370,1020 125,1020 | 835,125 900,120 940,115 940,0 | 895,0 905,260 | 840,300 920,305 | 1265,130 1265,400 | 1050,250 1040,290 1055,315 1070,270 | 610,790 612,895 735,895 735,820',
  'g 1490,940 1520,950 1568,1010 | 1490,940 1495,970 1525,1035 1568,1035 | 1305,1060 1500,1065 1500,1105 1305,1105 1305,1060 | 1270,1105 1568,1105 | 1270,1105 1275,1150 1568,1150 | 1400,1205 1520,1205 1568,1230 | 1400,1205 1400,1320 | 1400,1255 1510,1255 1530,1215 | 1345,1330 1568,1325 | 1345,1330 1355,1481 | 1385,1330 1385,1481 | 1395,1410 1460,1410 | 1568,1230 1510,1340 1440,1481 | 1540,480 1540,520 | 1540,310 1540,410 | 1530,1481 1530,1450 1568,1450',
  'h 308,0 308,240 360,440 370,540 410,640 | 455,40 610,35 | 455,40 460,290 | 308,190 450,185 | 340,300 460,300 600,290 | 500,110 550,110 560,140 530,160 500,150 500,110 | 560,120 605,128 | 0,300 135,335 130,460 | 135,350 230,380 270,490 260,520 | 0,425 190,480 330,575 | 365,430 430,430 430,445 | 190,480 225,475 230,510 | 320,610 370,530 | 340,620 370,580 | 185,630 190,660 260,660 | 440,670 600,672 | 350,770 440,765 | 350,770 345,810 410,815 410,855 330,855 330,815 | 410,855 450,850 470,820 | 500,770 575,850 | 165,820 130,890 105,890 105,820 | 160,820 100,1030 0,1240 | 0,995 90,1000 | 100,1035 270,1030 370,1018 480,1022 | 180,1030 175,970 205,965 210,910 235,915 240,970 265,985 270,1025 | 0,1150 30,1165',
  'h 130,1215 280,1215 285,1320 | 130,1215 125,1370 | 215,1215 215,1370 | 0,1330 120,1330 | 60,1335 60,1400 | 558,1180 555,1260 520,1300 510,1400 540,1400 545,1280 | 565,1215 585,1235 565,1250 | 670,895 730,940 735,1100 810,1130 940,1265 1055,1335 | 740,1035 1058,1035 1058,1380 1120,1385 1130,1400 1195,1390 1200,1440 1285,1440 1270,1400 1195,1395 | 885,1035 890,1095 840,1150 | 925,1035 920,1095 890,1095 | 1520,650 1520,500 1568,430 | 1170,760 1195,740 1220,755',
  'i 632,0 632,520 | 65,650 65,520 90,450 180,400 220,340 235,240 310,150 330,100 420,0 | 275,95 290,70 325,80 310,100 275,95 | 955,640 960,610 1000,615 1050,710 | 955,640 990,700 | 1075,600 1135,600 1100,650 1075,610 | 1120,640 1050,700 | 1430,830 1350,1000 1240,1215 | 1420,850 1468,885 | 1350,1000 1400,1040 1460,1070 | 1468,980 1460,1070 | 1200,1155 1250,1180 1270,1140 1235,1115 | 1240,1215 1370,1305 | 1400,1330 1468,1365'
];
const RAIL = [
  'c 1350,60 1210,220 1010,470 | 740,880 600,1000 520,1100 430,1260 | 335,1470 f 320,0 120,420 0,700 e 1440,720 1300,1000 1190,1260 | 1125,1390 1040,1568 h 1000,200 850,520 720,775 600,970 | 490,1190 330,1481',
  'h 710,785 780,775 1400,780 1470,790 1568,830 i 200,880 300,920 460,970 620,1020 850,1090 | 1170,1190 1230,1260 1350,1481',
  'h 1380,790 1335,870 1340,1481 | 740,740 780,775', 'i 500,985 455,1020 460,1430 | 262,900 262,780 | 300,920 365,985 | 460,1310 515,1365',
  'f 120,415 0,425'
];
const YELLOW = [
  [20, 13, 'a 633,45 633,900 d 618,40 615,750 623,850 620,980 610,1100 610,1350 625,1400 | g 700,60 830,200 860,260 930,320 1010,390 1120,440 1230,460 1350,500 1568,555 h 200,600 410,660 480,790 555,930 600,1000 650,1050 675,1110 680,1481'],
  [20, 13, 'd 620,773 910,773 1568,770 e 340,764 600,762 | 332,770 332,1050'],
  [20, 13, 'e 890,490 830,560 600,830 490,900 330,1060 180,1190 120,1270 70,1340 0,1387 d 1400,1475 | g 1240,130 1080,205 930,310'],
  [20, 13, 'e 897,450 895,350 925,230 960,100 1010,20 b 1040,1420 1110,1340 1200,1275 1330,1240 1430,1200 | c 140,1100 180,960 220,810 270,730 420,570 570,440 640,330 700,240 750,130'],
  [24, 16, 'e 1230,520 1280,545 1340,590 1390,680 1568,1040 f 110,1000 230,1250 400,1568 i 470,270 590,500 625,600 633,760 633,1300'],
  [20, 13, 'h 640,670 1568,675 i 330,680 | 633,760 860,820 1000,850 1100,820 1200,760 1280,715 1330,720 1440,800 1468,740'],
  [32, 26, 'e 740,462 900,460 1000,462 1110,490'],
  [35, 28, 'c 400,40 260,180 130,310 50,395 b 1400,590 1280,770 1090,1080 1000,1260 950,1420 e 880,130 790,320 740,480 690,700 665,1200 645,1500 h 625,300 610,550 620,600 650,680 650,760 600,860 540,980 470,1110 380,1230 240,1390 150,1481']
];
const RAMPS = 'c 750,580 720,690 | 785,580 825,650 | e 1150,395 1070,460 1055,520 1075,590 | 1250,420 1285,520 1200,600 1180,600 | 1230,520 1220,600 | 660,980 605,1030 595,1090 | 790,1080 760,1145 700,1190';
const FREEWAY = 'g -40,1510 155,1385 400,1225 640,1070 800,955 950,830 1130,655 1300,485 1568,225 e 150,1530 300,1380 450,1250 600,1140 700,1075 800,1015 920,925 1010,815 1090,680 1160,520 1230,350 1330,150 b 1400,1540 c 130,1285 220,1150 330,1030 440,935 560,860 700,785 850,710 1000,655 1150,565 1330,465 1480,360';
const ROUTE = 'g 643,775 715,820 765,905 790,980 802,1040 900,1043 970,1035 1025,1035 1090,920 1250,925 1315,880 1315,800 1300,620 1306,437 1568,441 h 370,455 565,385 830,393 910,300 908,0 e 740,1230';

/* sheet, start x, end x, baseline, text, [colour, halo, size] */
const LABELS = [
  ['c',352,722,1463,'Golf Club','#2f6132'], ['c',345,730,1350,'Linksman','#2f6132'],
  ['a',738,1136,768,'Di Grado'], ['b',288,775,1245,'Canterbury'], ['b',1190,1624,1187,'Crestview'],
  ['c',490,1052,98,'Heron Lakes','#214e25'], ['c',475,1052,213,'Country Club','#214e25'],
  ['d',1058,1550,298,'Devonshire'], ['e',167,463,308,'Nevius'], ['f',990,1397,355,'Riverside'],
  ['f',1380,1480,932,'Lo'], ['f',735,1073,1187,'Rochon'], ['d',135,587,1083,'Belmeade'],
  ['d',1070,1397,1550,'Hillview'], ['g',225,500,200,'Jeffer'], ['g',358,932,775,'Cedar Grove'],
  ['g',1380,1796,785,'Westfield'], ['e',987,1380,1350,'Koolman'], ['h',250,715,1155,'Theodore','#0c0c0c'],
  ['h',830,1385,712,'Hamilton Blvd','#3c3c0c','#fff95c'], ['i',1090,1445,412,'Alligator'], ['i',1135,1410,540,'Bayou'],
  ['i',1392,1510,1305,'Ba'], ['h',755,1045,1535,'Muddy'], ['h',1235,1680,1548,'Theodore']
];

function mapMarkup() {
  const p = (d, attrs, smooth) => `<path d="${trace(d, smooth)}" ${attrs}/>`;
  const poly = (list, fill) => list.map(d => `<path d="${trace(d).replace(/(?!^)M/g, 'ZM')}Z" fill="${fill}"/>`).join('');
  let s = '<rect x="100" y="2280" width="2300" height="2000" fill="#e9e5da"/>';
  s += poly(LIGHT, '#f1eee9') + poly(SHADE, '#e9e5da') + poly(PARK, '#a7cd95');
  s += CREEKS.map(d => p(d, 'stroke="#9dbad3" stroke-width="4.2"', true)).join('');
  s += poly(WATER, '#98b2cc') + poly(ISLAND, '#efece4');
  s += RIVERS.map(([w, d]) => p(d, `stroke="#98b2cc" stroke-width="${w}"`, true)).join('');
  s += MINOR.map(d => p(d, 'stroke="#b4afaa" stroke-width="5.6"')).join('');
  s += RAIL.map(d => p(d, 'stroke="#a39f9b" stroke-width="16" stroke-linecap="butt"') + p(d, 'stroke="#f6f5f2" stroke-width="9" stroke-linecap="butt"') + p(d, 'stroke="#a39f9b" stroke-width="13" stroke-dasharray="4 22" stroke-linecap="butt"')).join('');
  s += YELLOW.map(([w, , d]) => p(d, `stroke="#aa9f8c" stroke-width="${w}" stroke-linecap="butt"`, true)).join('');
  s += YELLOW.map(([, w, d]) => p(d, `stroke="#fff975" stroke-width="${w}" stroke-linecap="butt"`, true)).join('');
  s += p(RAMPS, 'stroke="#b98f22" stroke-width="14"', true) + p(RAMPS, 'stroke="#f7c63c" stroke-width="9"', true);
  const spur = 'c 778,30 780,200 785,555', wide = 'c 600,800 650,750 720,685 820,640 940,625 1010,650 1000,725 830,835 720,868 620,888';
  s += p(spur, 'stroke="#b48c20" stroke-width="59"') + p(wide, 'fill="#f1bd26" stroke="#b48c20" stroke-width="4"') + p(FREEWAY, 'stroke="#b48c20" stroke-width="58"', true);
  s += p(spur, 'stroke="#f1bd26" stroke-width="53"') + p(wide, 'fill="#f1bd26" stroke="none"') + p(FREEWAY, 'stroke="#f1bd26" stroke-width="51"', true);

  /* place names */
  for (const [sh, x0, x1, y, t, col = '#222', halo = '#fff', size = 54] of LABELS) {
    const [x, by] = at(sh, x0, y);
    s += `<text x="${x}" y="${by}" textLength="${(x1 - x0) * KX}" lengthAdjust="spacingAndGlyphs" font-size="${size}" fill="${col}" stroke="${halo}" stroke-width="20" paint-order="stroke">${t}</text>`;
  }
  const road = (x, y, a, len, t) => `<text transform="translate(${x} ${y}) rotate(${a})" textLength="${len}" lengthAdjust="spacingAndGlyphs" font-size="50" fill="#26260a" stroke="#fff95c" stroke-width="20" paint-order="stroke">${t}</text>`;
  s += road(404, 2692, 90, 278, 'Schillinger.Rd') + road(1949, 4179, 90, 84, 'Ran') + road(1299, 3182, -67.5, 272, 'ernment Blvd');

  /* route shields */
  const num = (x, y, t, w, fill) => `<text x="${x}" y="${y}" text-anchor="middle" textLength="${w}" lengthAdjust="spacingAndGlyphs" font-weight="700" font-size="55" fill="${fill}">${t}</text>`;
  const oval = (x, y, rx, t, w) => `<ellipse cx="${x}" cy="${y}" rx="${rx - 3}" ry="38" fill="#fff" stroke="#1a1a1a" stroke-width="7"/>` + num(x, y + 19, t, w, '#111');
  s += oval(1426.5, 2803, 62, '16', 58) + oval(1881, 3924, 78, '163', 90) + oval(976.5, 4252, 62, '90', 58);
  s += `<path transform="translate(1521 2668)" d="M-41-44C-30-38-12-40 0-45C12-40 30-38 41-44L54-29C43-12 55 4 53 17C50 36 14 34 0 46C-14 34-50 36-53 17C-55 4-43-12-54-29Z" fill="#fff" stroke="#1a1a1a" stroke-width="7.5" stroke-linejoin="round"/>` + num(1521, 2686, '90', 58, '#111');
  for (const [x, y] of [[2174, 2561], [1541.5, 3084], [934, 3664], [129, 4249]])
    s += `<g transform="translate(${x} ${y})"><path d="M-43-48Q-30-42-20-48Q-8-43 0-49Q8-43 20-48Q30-42 43-48Q50-35 48-18C49 18 26 42 0 50C-26 42-49 18-48-18Q-50-35-43-48Z" fill="#fff" stroke="#fff" stroke-width="7" stroke-linejoin="round"/>
      <path d="M-41-46Q-28-38-20-45Q-8-38 0-46Q8-38 20-45Q28-38 41-46L44-31H-44Z" fill="#e14d4d"/><path d="M-46-21H46C47 15 24 40 0 48C-24 40-47 15-46-21Z" fill="#6867c9"/></g>` + num(x, y + 27, '10', 60, '#fff');

  /* travelled route */
  const r = trace(ROUTE);
  s += `<mask id="edge" maskUnits="userSpaceOnUse" x="100" y="2280" width="2300" height="2000"><rect x="100" y="2280" width="2300" height="2000" fill="#fff"/><path d="${r}" stroke="#000" stroke-width="27" fill="none"/></mask>`;
  s += `<path d="${r}" stroke="#92e4ea" stroke-opacity=".55" stroke-width="28"/><path d="${r}" stroke="#4f6262" stroke-width="32" mask="url(#edge)"/>`;

  /* pins */
  const sheet = k => `translate(${SHEETS[k]}) scale(${KX} ${KY})`;
  s += `<g transform="${sheet('e')}"><path d="M735 1200C830 1090 860 900 940 790C1020 680 1170 700 1220 810C1260 910 1230 1020 1140 1070C1040 1120 850 1100 735 1200Z" fill="#000" fill-opacity=".34" filter="url(#soft)"/>
    <path d="M705 490C610 490 530 580 530 690C530 745 550 800 580 848C640 935 690 1040 695 1197L714 1197C718 1040 770 935 832 848C862 800 880 745 880 690C880 580 800 490 705 490Z" fill="#d73d2f"/><ellipse cx="704.5" cy="701" rx="62" ry="72" fill="#6d2c28"/></g>`;
  const leaf = 'M641-59C535-59 453 45 453 160C455 235 480 290 520 350C590 460 622 560 628 707L654 707C660 560 690 440 765 345C805 290 830 235 831 160C831 45 750-59 641-59Z';
  s += `<g transform="${sheet('g')}"><path d="M680 620C770 510 830 320 910 240C1000 160 1120 190 1155 300C1185 400 1130 510 1030 550C900 590 800 540 680 620Z" fill="#000" fill-opacity=".34" filter="url(#soft)"/>
    <path d="${leaf}" fill="#000" fill-opacity=".6" filter="url(#tight)"/><path d="${leaf}" fill="#c2d93c" stroke="#98ab28" stroke-width="5"/><ellipse cx="641" cy="168" rx="67" ry="76" fill="#6d7f05"/></g>`;
  return s;
}

define('trip-map', `
<style>
  :host { display: block; position: relative; width: 2046px; height: 1765px; margin: 82px 0 0 104px; overflow: hidden; flex: none; }
  svg { display: block; width: 100%; height: 100%; font-family: "Liberation Sans", Arial, sans-serif; }
  .vignette { position: absolute; inset: 0; box-shadow: inset 0 0 75px rgba(0,0,0,.38); pointer-events: none; }
  ::slotted(locate-button) { position: absolute; right: 90px; bottom: 103px; }
</style>
<svg viewBox="115.8 2300 2273.2 1961" preserveAspectRatio="none" fill="none" stroke-linejoin="round" stroke-linecap="round">
  <defs><filter id="soft" x="-40%" y="-40%" width="180%" height="180%"><feGaussianBlur stdDeviation="42"/></filter>
  <filter id="tight" x="-20%" y="-20%" width="140%" height="140%"><feGaussianBlur stdDeviation="13"/></filter></defs>
  <g id="world"></g>
</svg><div class="vignette"></div><slot name="control"></slot>`, (host, root) => { root.getElementById('world').innerHTML = mapMarkup(); });

/* text tracked out to a given advance width */
define('tracked-text', `<style>:host { display: inline-block; white-space: nowrap; } span { display: inline-block; font-variant-ligatures: none; }</style><span><slot></slot></span>`, (host, root) => {
  const span = root.querySelector('span');
  const n = host.textContent.length;
  span.style.letterSpacing = ((+host.getAttribute('fit') - span.getBoundingClientRect().width) / n).toFixed(2) + 'px';
});
</script>
</body>
</html>
